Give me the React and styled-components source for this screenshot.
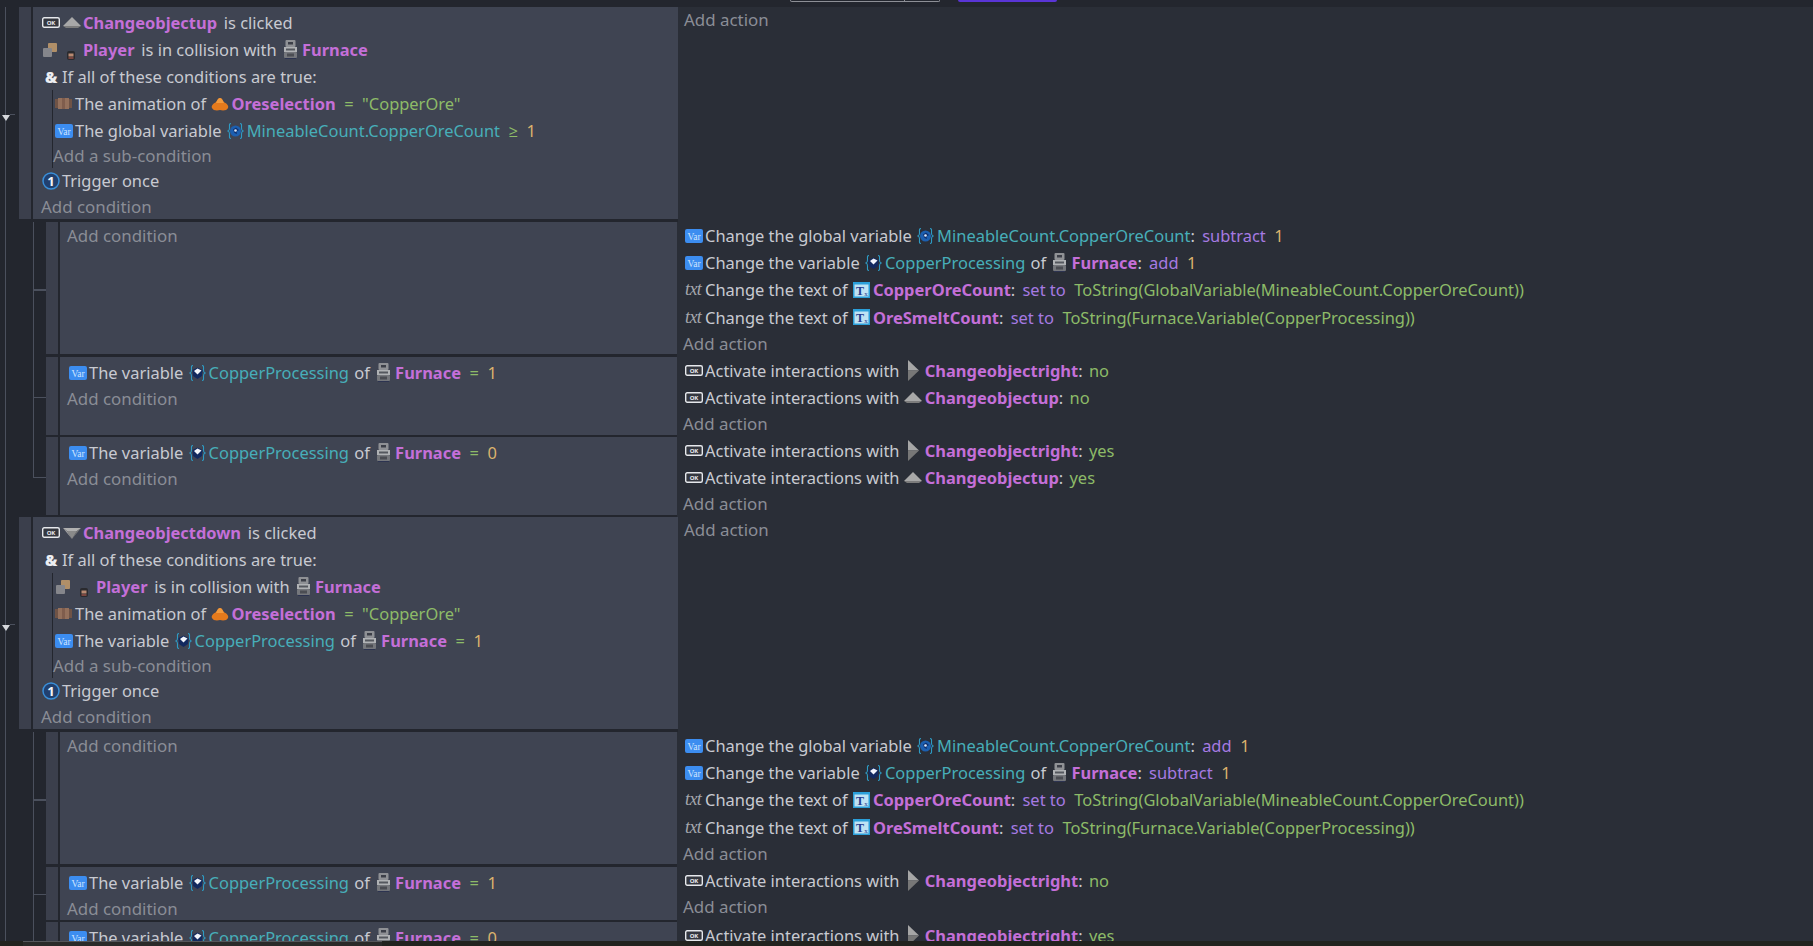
import React from 'react';
import styled, { createGlobalStyle } from 'styled-components';

const GlobalStyle = createGlobalStyle`
  html, body { margin: 0; padding: 0; background: #23262e; }
  body { font-family: "Noto Sans", "Open Sans", sans-serif; }
`;

const Page = styled.div`
  width: 1813px;
  height: 946px;
  display: flex;
  flex-direction: column;
  overflow: hidden;
  background: #23262e;
  color: #c8cad1;
  font-size: 16.45px;
`;

const TopStrip = styled.div`
  height: 7px;
  flex-shrink: 0;
  display: flex;
  align-items: flex-start;
  gap: 18px;
  padding-left: 790px;
`;
const SplitButton = styled.div`
  width: 150px;
  height: 2px;
  box-sizing: border-box;
  border: 1px solid #8d8f96;
  border-top: 0;
  border-radius: 0 0 3px 3px;
  display: flex;
  justify-content: flex-end;
  > i { width: 34px; border-left: 1px solid #8d8f96; }
`;
const PrimaryButton = styled.div`
  width: 99px;
  height: 2px;
  background: #5a35d6;
  border-radius: 0 0 4px 4px;
`;

const Sheet = styled.div`
  flex: 1;
  min-height: 0;
  overflow: hidden;
  padding-left: 5px;
`;
const Rail = styled.div`
  border-left: 1px solid #4b505d;
  min-height: 100%;
`;

const Row = styled.div`
  display: flex;
  height: ${(p) => p.$h + p.$gap}px;
`;

const FoldGutter = styled.div`
  width: 13px;
  flex-shrink: 0;
  display: flex;
  align-items: center;
  margin-left: -4px;
  padding-right: 4px;
  box-sizing: content-box;
`;
const FoldArrow = styled.span`
  width: 0;
  height: 0;
  flex-shrink: 0;
  margin-top: 6px;
  border-left: 4px solid transparent;
  border-right: 4px solid transparent;
  border-top: 6px solid #d4d6da;
`;
const FoldTick = styled.span`
  flex: 1;
  height: 1px;
  margin-top: -1px;
  background: #4b505d;
`;

const Indent = styled.div`
  width: 27px;
  flex-shrink: 0;
`;
const Branch = styled.div`
  width: 13px;
  flex-shrink: 0;
  display: flex;
  flex-direction: column;
`;
const BranchTop = styled.div`
  flex: 1;
  border-left: 1px solid #4b505d;
  border-bottom: ${(p) => (p.$thick ? 2 : 1)}px solid #4b505d;
`;
const BranchBottom = styled.div`
  flex: 1;
  border-left: ${(p) => (p.$last ? 'none' : '1px solid #4b505d')};
`;

const Handle = styled.div`
  width: 12px;
  flex-shrink: 0;
  margin-bottom: ${(p) => p.$gap}px;
  background: #3b3f4c;
`;
const Conditions = styled.div`
  width: ${(p) => p.$w}px;
  flex-shrink: 0;
  margin-left: 2px;
  margin-bottom: ${(p) => p.$gap}px;
  padding: 2px 0 0 ${(p) => p.$pad}px;
  box-sizing: border-box;
  background: #3f4452;
`;
const Actions = styled.div`
  flex: 1;
  background: #2a2e37;
  padding-left: 6px;
`;

const Line = styled.div`
  height: ${(p) => p.$h || 27}px;
  display: flex;
  align-items: center;
  white-space: pre;
`;
const ActionLine = styled(Line)`
  height: 27.2px;
  padding-left: 2px;
`;
const Placeholder = styled.div`
  height: ${(p) => p.$h || 26}px;
  line-height: ${(p) => p.$h || 26}px;
  margin-left: ${(p) => p.$shift || 0}px;
  font-size: 16.9px;
  color: #8a8d96;
`;
const SubBlock = styled.div`
  margin-left: ${(p) => p.$left}px;
  padding-left: 2px;
  border-left: 1px solid #23262e;
`;

const TypeSlot = styled.span`
  width: 20px;
  height: 20px;
  flex-shrink: 0;
  display: flex;
  align-items: center;
`;
const ObjectSlot = styled.span`
  width: 19px;
  height: 22px;
  flex-shrink: 0;
  margin-right: 2px;
  display: flex;
  align-items: center;
  justify-content: center;
`;
const AndGlyph = styled.span`
  font-size: 15.5px;
  font-weight: 900;
  color: #eceef2;
  margin-left: 3px;
`;
const TxtGlyph = styled.span`
  font-family: "Liberation Serif", serif;
  font-style: italic;
  font-size: 18px;
  letter-spacing: -0.6px;
  color: #a4a6ac;
`;

const Obj = styled.span`
  font-weight: 700;
  color: #c46fd8;
`;
const VarName = styled.span`
  color: #47aeb9;
`;
const Tail = styled.span`
  margin-left: ${(p) => p.$left || 2.5}px;
`;
const Op = styled.span`
  color: ${(p) => (p.$action ? '#a67ae2' : '#8dbb68')};
  margin-left: ${(p) => (p.$action ? 3 : 0)}px;
`;
const Num = styled.span`
  color: #dcb36d;
`;
const Str = styled.span`
  color: #8dbb68;
  margin-left: ${(p) => p.$left || 0}px;
`;

/* small drawings standing in for the editor's sprite thumbnails */
const OkIcon = () => (
  <svg width="18" height="11" viewBox="0 0 18 11">
    <rect x="0.7" y="0.7" width="16.6" height="9.6" rx="1.5" fill="#34373f" stroke="#e6e8ec" strokeWidth="1.4" />
    <text x="9" y="7.8" textAnchor="middle" fontSize="6" fontWeight="700" fontFamily="Noto Sans, sans-serif" fill="#e6e8ec">OK</text>
  </svg>
);
const VarIcon = () => (
  <svg width="18" height="14" viewBox="0 0 18 14">
    <rect width="18" height="14" rx="2" fill="#3c8df0" />
    <text x="9" y="10.5" textAnchor="middle" fontSize="9.5" fontFamily="Liberation Serif, serif" fill="#cfe4ff">Var</text>
  </svg>
);
const ArrowIcon = ({ dir }) => {
  if (dir === 'right') {
    return (
      <svg width="12" height="21" viewBox="0 0 12 21">
        <polygon points="1,0 12,10.5 1,10.5" fill="#a6a6a6" />
        <polygon points="1,21 12,10.5 1,10.5" fill="#777777" />
      </svg>
    );
  }
  if (dir === 'down') {
    return (
      <svg width="18" height="12" viewBox="0 0 18 12">
        <polygon points="0,1 18,1 14,4 4,4" fill="#b0b0b0" />
        <polygon points="4,4 14,4 9,12" fill="#8a8a8a" />
        <polygon points="0,1 4,4 9,12" fill="#a0a0a0" />
        <polygon points="18,1 14,4 9,12" fill="#787878" />
      </svg>
    );
  }
  return (
    <svg width="18" height="11" viewBox="0 0 18 11">
      <polygon points="9,0 18,9 0,9" fill="#a8a8a8" />
      <polygon points="0,9 18,9 15,11 3,11" fill="#7c7c7c" />
    </svg>
  );
};
const CollisionIcon = () => (
  <svg width="16" height="14" viewBox="0 0 16 14">
    <rect x="6" y="0" width="9" height="9" rx="1" fill="#b08f68" />
    <rect x="1" y="5" width="9" height="9" rx="1" fill="#85868b" />
  </svg>
);
const PlayerIcon = () => (
  <svg width="19" height="22" viewBox="0 0 19 22">
    <rect x="5" y="12" width="8" height="9" rx="2" fill="#2a2a2e" />
    <rect x="6.5" y="14.5" width="5" height="3" fill="#b98a72" />
    <rect x="6.5" y="18" width="5" height="2" fill="#7a4640" />
  </svg>
);
const FurnaceIcon = () => (
  <svg width="15" height="19" viewBox="0 0 15 19">
    <rect x="2.5" y="0" width="10" height="7" rx="1" fill="#8f9195" />
    <rect x="5" y="2" width="5" height="2.5" fill="#3c3f48" />
    <rect x="1" y="7" width="13" height="5" fill="#b0b2b5" />
    <rect x="3" y="8.5" width="9" height="2" fill="#55585f" />
    <rect x="1" y="12" width="13" height="6" rx="1" fill="#75777c" />
    <rect x="4" y="13.5" width="7" height="3" fill="#4b4d53" />
    <rect x="2" y="18" width="11" height="1" fill="#2c3350" />
  </svg>
);
const BarrelIcon = () => (
  <svg width="17" height="11" viewBox="0 0 17 11">
    <rect x="0" y="1" width="3" height="9" fill="#6f5346" />
    <rect x="3" y="0" width="4" height="11" fill="#93705c" />
    <rect x="7" y="0" width="3" height="11" fill="#7f5d4d" />
    <rect x="10" y="0" width="4" height="11" fill="#93705c" />
    <rect x="14" y="1" width="3" height="9" fill="#6f5346" />
  </svg>
);
const OreIcon = () => (
  <svg width="18" height="14" viewBox="0 0 18 14">
    <path d="M9 1 C11 1 12 4 13.5 5.5 C16 6.5 18 9 17 11 C16 13.5 12 14 9 13 C6 14 2 13.5 1 11 C0 9 2 6.5 4.5 5.5 C6 4 7 1 9 1 Z" fill="#e57a1c" />
    <path d="M9 1 C11 1 12 4 13 6 L5 6 C6 4 7 1 9 1 Z" fill="#f39a3c" />
  </svg>
);
const TriggerIcon = () => (
  <svg width="18" height="18" viewBox="0 0 18 18">
    <circle cx="9" cy="9" r="8" fill="#21406f" stroke="#3a8fd8" strokeWidth="1.5" />
    <text x="9" y="13.5" textAnchor="middle" fontSize="13" fontWeight="700" fontFamily="Noto Sans, sans-serif" fill="#f2f4f8">1</text>
  </svg>
);
const TextObjIcon = () => (
  <svg width="17" height="16" viewBox="0 0 17 16">
    <rect width="17" height="16" fill="#2b9fd9" />
    <rect x="1.5" y="2.5" width="14" height="12" fill="#bfe2f3" />
    <text x="7" y="12.5" textAnchor="middle" fontSize="12" fontWeight="700" fontFamily="Liberation Serif, serif" fill="#253c8e">T</text>
    <text x="13" y="13.5" textAnchor="middle" fontSize="7" fontFamily="Liberation Serif, serif" fill="#253c8e">x</text>
  </svg>
);
const ScopeIcon = ({ global }) => (
  <svg width="17" height="18" viewBox="0 0 17 18">
    <path d="M4 1.5 C2 1.5 2.5 3 2.5 6 C2.5 8 2 8.7 1 9 C2 9.3 2.5 10 2.5 12 C2.5 15 2 16.5 4 16.5" fill="none" stroke="#2e9bc4" strokeWidth="1.1" />
    <path d="M13 1.5 C15 1.5 14.5 3 14.5 6 C14.5 8 15 8.7 16 9 C15 9.3 14.5 10 14.5 12 C14.5 15 15 16.5 13 16.5" fill="none" stroke="#2e9bc4" strokeWidth="1.1" />
    {global ? (
      <>
        <circle cx="8.5" cy="9" r="5.5" fill="#1c5fb0" />
        <path d="M6 7.5 L9 5.5 L12 8 L9.5 9.5 L10 12 L7.5 11 Z" fill="#0f2f6e" />
        <circle cx="8.5" cy="8.5" r="1.3" fill="#dbe8f8" />
      </>
    ) : (
      <>
        <polygon points="8.5,3.5 13.5,6 13,12 8.5,15 4,12 3.5,6" fill="#12295f" />
        <polygon points="8.5,4.5 12.5,6.5 8.5,10.5 5,7" fill="#f2f5fa" />
      </>
    )}
  </svg>
);

const O = ({ kind, children }) => {
  const icons = {
    up: <ArrowIcon dir="up" />,
    down: <ArrowIcon dir="down" />,
    right: <ArrowIcon dir="right" />,
    player: <PlayerIcon />,
    furnace: <FurnaceIcon />,
    ore: <OreIcon />,
    text: <TextObjIcon />,
  };
  return (
    <>
      <ObjectSlot>{icons[kind]}</ObjectSlot>
      <Obj>{children}</Obj>
    </>
  );
};
const V = ({ global, children }) => (
  <>
    <ObjectSlot><ScopeIcon global={global} /></ObjectSlot>
    <VarName>{children}</VarName>
  </>
);
const T = ({ children }) => <TypeSlot>{children}</TypeSlot>;

const FoldedRail = () => (
  <FoldGutter>
    <FoldArrow />
    <FoldTick />
  </FoldGutter>
);

const VariableCondition = ({ value }) => (
  <Line>
    <T><VarIcon /></T>The variable <V>CopperProcessing</V><Tail $left={1}> of </Tail><O kind="furnace">Furnace</O>
    <Op>{'  =  '}</Op><Num>{value}</Num>
  </Line>
);

const CollisionCondition = () => (
  <Line>
    <T><CollisionIcon /></T><O kind="player">Player</O><Tail> is in collision with </Tail><O kind="furnace">Furnace</O>
  </Line>
);

const AnimationCondition = () => (
  <Line>
    <T><BarrelIcon /></T>The animation of <O kind="ore">Oreselection</O><Op>{'  =  '}</Op><Str>"CopperOre"</Str>
  </Line>
);

const ActivateAction = ({ kind, name, value }) => (
  <ActionLine>
    <T><OkIcon /></T>Activate interactions with <O kind={kind}>{name}</O>: <Str $left={2}>{value}</Str>
  </ActionLine>
);

const ClickedEvent = ({ kind, name, top, nested }) => (
  <Row $h={212} $gap={3}>
    <FoldedRail />
    <Handle $gap={3} />
    <Conditions $w={645} $gap={3} $pad={9}>
      <Line><T><OkIcon /></T><O kind={kind}>{name}</O><Tail> is clicked</Tail></Line>
      {top}
      <Line><T><AndGlyph>&amp;</AndGlyph></T>If all of these conditions are true:</Line>
      <SubBlock $left={10}>
        {nested}
        <Placeholder $h={24} $shift={-2}>Add a sub-condition</Placeholder>
      </SubBlock>
      <Line $h={25}><T><TriggerIcon /></T>Trigger once</Line>
      <Placeholder $h={28} $shift={-1}>Add condition</Placeholder>
    </Conditions>
    <Actions><Placeholder>Add action</Placeholder></Actions>
  </Row>
);

const SubEvent = ({ h, gap, thick, last, conditions, children }) => (
  <Row $h={h} $gap={gap}>
    <Indent />
    <Branch>
      <BranchTop $thick={thick} />
      <BranchBottom $last={last} />
    </Branch>
    <Handle $gap={gap} />
    <Conditions $w={617} $gap={gap} $pad={9}>
      {conditions}
      <Placeholder $h={conditions ? 26 : 24} $shift={-2}>Add condition</Placeholder>
    </Conditions>
    <Actions>{children}</Actions>
  </Row>
);

const ChangeActions = ({ globalOp, varOp }) => (
  <>
    <ActionLine>
      <T><VarIcon /></T>Change the global variable <V global>MineableCount.CopperOreCount</V>: <Op $action>{globalOp}</Op><Num>{'  1'}</Num>
    </ActionLine>
    <ActionLine>
      <T><VarIcon /></T>Change the variable <V>CopperProcessing</V><Tail $left={1}> of </Tail><O kind="furnace">Furnace</O>: <Op $action>{varOp}</Op><Num>{'  1'}</Num>
    </ActionLine>
    <ActionLine>
      <T><TxtGlyph>txt</TxtGlyph></T>Change the text of <O kind="text">CopperOreCount</O>: <Op $action>set to</Op><Str>{'  ToString(GlobalVariable(MineableCount.CopperOreCount))'}</Str>
    </ActionLine>
    <ActionLine>
      <T><TxtGlyph>txt</TxtGlyph></T>Change the text of <O kind="text">OreSmeltCount</O>: <Op $action>set to</Op><Str>{'  ToString(Furnace.Variable(CopperProcessing))'}</Str>
    </ActionLine>
    <Placeholder>Add action</Placeholder>
  </>
);

const Footer = styled.div`
  height: 5px;
  flex-shrink: 0;
  padding-left: 23px;
  background: #22231f;
`;
const FooterTab = styled.div`
  width: 359px;
  height: 5px;
  box-sizing: border-box;
  border-top: 1px solid #55565a;
  background: #2a2a29;
`;

export default function App() {
  return (
    <Page>
      <GlobalStyle />
      <TopStrip>
        <SplitButton><i /></SplitButton>
        <PrimaryButton />
      </TopStrip>
      <Sheet>
        <Rail>
          <ClickedEvent
            kind="up"
            name="Changeobjectup"
            top={<CollisionCondition />}
            nested={
              <>
                <AnimationCondition />
                <Line>
                  <T><VarIcon /></T>The global variable <V global>MineableCount.CopperOreCount</V><Op>{'  \u2265  '}</Op><Num>1</Num>
                </Line>
              </>
            }
          />
          <SubEvent h={132} gap={3} thick conditions={null}>
            <ChangeActions globalOp="subtract" varOp="add" />
          </SubEvent>
          <SubEvent h={78} gap={2} conditions={<VariableCondition value="1" />}>
            <ActivateAction kind="right" name="Changeobjectright" value="no" />
            <ActivateAction kind="up" name="Changeobjectup" value="no" />
            <Placeholder>Add action</Placeholder>
          </SubEvent>
          <SubEvent h={78} gap={2} last conditions={<VariableCondition value="0" />}>
            <ActivateAction kind="right" name="Changeobjectright" value="yes" />
            <ActivateAction kind="up" name="Changeobjectup" value="yes" />
            <Placeholder>Add action</Placeholder>
          </SubEvent>

          <ClickedEvent
            kind="down"
            name="Changeobjectdown"
            nested={
              <>
                <CollisionCondition />
                <AnimationCondition />
                <VariableCondition value="1" />
              </>
            }
          />
          <SubEvent h={132} gap={3} thick conditions={null}>
            <ChangeActions globalOp="add" varOp="subtract" />
          </SubEvent>
          <SubEvent h={53} gap={2} conditions={<VariableCondition value="1" />}>
            <ActivateAction kind="right" name="Changeobjectright" value="no" />
            <Placeholder>Add action</Placeholder>
          </SubEvent>
          <SubEvent h={78} gap={2} last conditions={<VariableCondition value="0" />}>
            <ActivateAction kind="right" name="Changeobjectright" value="yes" />
          </SubEvent>
        </Rail>
      </Sheet>
      <Footer><FooterTab /></Footer>
    </Page>
  );
}
